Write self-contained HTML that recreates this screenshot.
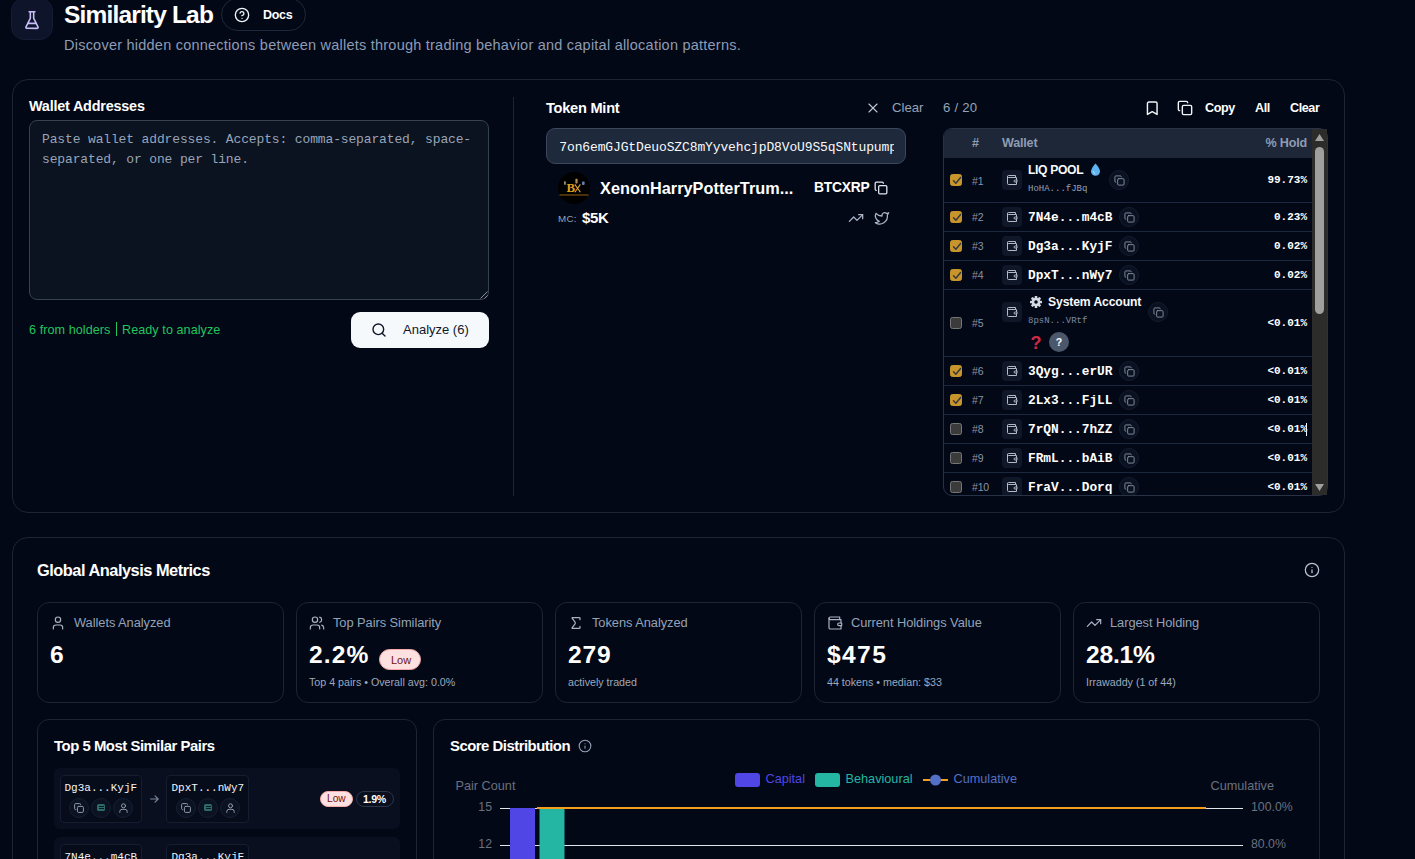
<!DOCTYPE html>
<html lang="en">
<head>
<meta charset="utf-8">
<title>Similarity Lab</title>
<style>
*{box-sizing:border-box;margin:0;padding:0}
html,body{width:1415px;height:859px;overflow:hidden;background:#030816;color:#fff;font-family:"Liberation Sans",Arial,sans-serif;}
body{position:relative}
.abs{position:absolute}
.mono{font-family:"Liberation Mono","DejaVu Sans Mono",monospace}
.t{position:absolute;white-space:nowrap;line-height:1}
svg{display:block;overflow:visible}
.ic{position:absolute;fill:none;stroke:currentColor;stroke-width:2;stroke-linecap:round;stroke-linejoin:round}
/* header */
#logo{left:11px;top:-2px;width:42px;height:42px;border-radius:13px;background:#0e152a;border:1px solid #151d35}
#docs{left:221px;top:-2px;width:85px;height:33px;border-radius:17px;border:1px solid #1e293b}
.card{position:absolute;border:1px solid #1c2536;border-radius:16px;background:#030816}
.hb{margin-top:1px;font-size:12.6px;font-weight:700;letter-spacing:-0.42px}

.th{font-size:12.6px;font-weight:700;color:#8e9bb2;letter-spacing:-0.2px}
.cb{width:12px;height:12px;border-radius:2.5px;background:#3b3b3b;border:1px solid #767676}
.cb.on{background:#c8952c;border-color:#c8952c}
.num{font-size:10.5px;color:#8794aa;letter-spacing:-0.2px}
.wb{width:20px;height:20px;border-radius:4px;background:#0f1728}
.cbn{width:20px;height:20px;border-radius:10px;background:#0a1120;border:1px solid #141d30}
.lbl{font-size:12.2px;font-weight:700;letter-spacing:-0.25px;color:#f8fafc}
.sub{font-size:9px;color:#94a3b8}
.addr{font-size:12.8px;font-weight:700;color:#fff}
.pct{font-size:11px;font-weight:700;color:#fff}
/*C2*/
.mc{width:247px;height:101px;border:1px solid #1c2536;border-radius:12px;background:#030816}
.mi{stroke-width:1.15;color:#a9b3c4}
.ml{font-size:12.85px;color:#94a3b8;letter-spacing:-0.05px}
.mv{font-size:24.600px;font-weight:700;letter-spacing:-0.2px}
.ms{font-size:10.7px;color:#9da9bd;letter-spacing:0px}
.pc{width:20px;height:20px;border-radius:10px;background:#0b1222;border:1px solid #161f33}
/*C2E*/</style>
</head>
<body>
<!-- HEADER -->
<div id="logo" class="abs"></div>
<svg class="ic" style="left:22px;top:9.5px;color:#c9bdf7;stroke-width:1.9" width="20" height="20" viewBox="0 0 24 24"><path d="M10 2v7.527a2 2 0 0 1-.211.896L4.720 20.550a1 1 0 0 0 .9 1.450h12.760a1 1 0 0 0 .9-1.450l-5.069-10.127A2 2 0 0 1 14 9.527V2"/><path d="M8.500 2h7"/><path d="M7 16h10"/></svg>
<div class="t" id="title" style="left:64px;top:3px;font-size:24.5px;font-weight:700;letter-spacing:-0.83px">Similarity Lab</div>
<div id="docs" class="abs"></div>
<svg class="ic" style="left:233.5px;top:7px;color:#f1f5f9;stroke-width:2" width="16" height="16" viewBox="0 0 24 24"><circle cx="12" cy="12" r="10"/><path d="M9.090 9a3 3 0 0 1 5.830 1c0 2-3 3-3 3"/><path d="M12 17h.01"/></svg>
<div class="t" id="docs_t" style="left:263px;top:9px;font-size:12.5px;font-weight:700;letter-spacing:-0.3px">Docs</div>
<div class="t" id="sub" style="left:64px;top:38px;font-size:14.5px;letter-spacing:0.23px;color:#8d9bb5">Discover hidden connections between wallets through trading behavior and capital allocation patterns.</div>

<!-- CARD 1 -->
<div class="card" style="left:12px;top:79px;width:1333px;height:434px"></div>
<div class="t" id="wa" style="left:29px;top:99px;font-size:14.4px;font-weight:700;letter-spacing:-0.2px">Wallet Addresses</div>
<div class="abs" id="ta" style="left:29px;top:120px;width:460px;height:180px;border:1px solid #364152;border-radius:8px;background:#0b1220"></div>
<div class="t mono" style="left:42px;top:130px;font-size:13px;letter-spacing:-0.14px;line-height:20px;color:#98a5b8;white-space:pre">Paste wallet addresses. Accepts: comma-separated, space-
separated, or one per line.</div>
<svg class="abs" style="left:480px;top:291px" width="8" height="8" viewBox="0 0 8 8"><path d="M7.5 .5L.5 7.5M7.5 4.5L4.5 7.5" stroke="#8a92a0" stroke-width="1" fill="none"/></svg>
<div class="t" id="status" style="left:29px;top:322px;font-size:12.6px;letter-spacing:0.07px;color:#22c55e">6 from holders<span style="display:inline-block;width:1px;height:14px;background:#22c55e;margin:0 5px 0 5.500px;vertical-align:-2.500px"></span>Ready to analyze</div>
<div class="abs" id="abtn" style="left:351px;top:312px;width:138px;height:36px;border-radius:9px;background:#f5f9fc"></div>
<svg class="ic" style="left:371px;top:322px;color:#0f172a;stroke-width:2.1" width="16" height="16" viewBox="0 0 24 24"><circle cx="11" cy="11" r="8"/><path d="m21 21-4.300-4.300"/></svg>
<div class="t" id="abtn_t" style="left:403px;top:323px;font-size:13px;color:#0f172a;">Analyze (6)</div>
<div class="abs" style="left:513px;top:97px;width:1px;height:399px;background:#1c2536"></div>


<!-- TOKEN MINT -->
<div class="t" id="tm" style="left:546px;top:101px;font-size:14.6px;font-weight:700;letter-spacing:-0.25px">Token Mint</div>
<svg class="ic" style="left:864.7px;top:100.3px;color:#bcc6d4;stroke-width:1.7" width="16" height="16" viewBox="0 0 24 24"><path d="M18 6 6 18"/><path d="m6 6 12 12"/></svg>
<div class="t" id="clr1" style="left:892px;top:101px;font-size:13.2px;color:#94a3b8">Clear</div>
<div class="abs" style="left:546px;top:128px;width:360px;height:36px;border:1px solid #3a475c;border-radius:9px;background:#1e293b;overflow:hidden">
  <div class="t mono" id="mint" style="left:12.3px;top:11px;width:334.5px;overflow:hidden;font-size:13px;letter-spacing:-0.13px;color:#f8fafc;line-height:15px">7on6emGJGtDeuoSZC8mYyvehcjpD8VoU9S5qSNtupump</div>
</div>
<svg class="abs" style="left:558px;top:172px" width="32" height="32" viewBox="0 0 32 32"><circle cx="16" cy="16" r="16" fill="#000"/><text x="12.700" y="20.400" font-family="Liberation Serif,serif" font-weight="700" font-size="12.800" fill="#dfa01f" text-anchor="middle">B</text><path d="M16.800 12.400l5.600 7.800M22.400 12.400l-5.600 7.800" stroke="#d9a531" stroke-width="1.100" fill="none"/><rect x="1.500" y="22.300" width="29" height="1.400" fill="#7a5414" opacity=".85"/><rect x="6" y="9.200" width="1.800" height="3.600" rx=".6" fill="#c9c2b0" opacity=".75"/><rect x="17.400" y="6.800" width="2.200" height="4.600" rx=".7" fill="#e0b070" opacity=".8"/><rect x="24" y="9.400" width="2.600" height="3.600" rx=".8" fill="#7f9fd6" opacity=".8"/></svg>
<div class="t" id="tname" style="left:600px;top:180px;font-size:16.3px;font-weight:700;letter-spacing:0.03px">XenonHarryPotterTrum...</div>
<div class="t" id="tsym" style="left:814px;top:181px;font-size:13.8px;font-weight:700;letter-spacing:-0.2px">BTCXRP</div>
<svg class="ic" style="left:874.4px;top:181.3px;color:#e2e8f0;stroke-width:2.2" width="14" height="14" viewBox="0 0 24 24"><rect width="14" height="14" x="8" y="8" rx="2" ry="2"/><path d="M4 16c-1.1 0-2-.9-2-2V4c0-1.1.9-2 2-2h10c1.1 0 2 .9 2 2"/></svg>
<div class="t" id="mc" style="left:558px;top:214px;font-size:9.8px;color:#94a3b8;letter-spacing:0.3px">MC:</div>
<div class="t" id="mcv" style="left:582px;top:210px;font-size:15px;font-weight:700;letter-spacing:-0.3px">$5K</div>
<svg class="ic" style="left:848.1px;top:209.7px;color:#aab6c8;stroke-width:1.9" width="16" height="16" viewBox="0 0 24 24"><polyline points="22 7 13.5 15.5 8.5 10.5 2 17"/><polyline points="16 7 22 7 22 13"/></svg>
<svg class="ic" style="left:873.7px;top:209.7px;color:#aab6c8;stroke-width:1.9" width="16" height="16" viewBox="0 0 24 24"><path d="M22 4s-.7 2.100-2 3.400c1.600 10-9.400 17.300-18 11.600 2.200.1 4.400-.6 6-2C3 15.500.5 9.600 3 5c2.200 2.600 5.600 4.100 9 4-.9-4.200 4-6.600 7-3.800 1.100 0 3-1.200 3-1.200z"/></svg>

<!-- HOLDERS HEADER -->
<div class="t" id="cnt" style="left:943px;top:101px;font-size:13.200px;color:#94a3b8;letter-spacing:0.2px">6 / 20</div>
<svg class="ic" style="left:1144.3px;top:99.8px;color:#f1f5f9;stroke-width:2.1" width="16.5" height="16.5" viewBox="0 0 24 24"><path d="m19 21-7-4-7 4V5a2 2 0 0 1 2-2h10a2 2 0 0 1 2 2v16z"/></svg>
<svg class="ic" style="left:1177px;top:100.1px;color:#f1f5f9;stroke-width:2.1" width="16" height="16" viewBox="0 0 24 24"><rect width="14" height="14" x="8" y="8" rx="2" ry="2"/><path d="M4 16c-1.1 0-2-.9-2-2V4c0-1.1.9-2 2-2h10c1.1 0 2 .9 2 2"/></svg>
<div class="t hb" id="h_copy" style="left:1205px;top:101px">Copy</div>
<div class="t hb" id="h_all" style="left:1255px;top:101px">All</div>
<div class="t hb" id="h_clear" style="left:1290px;top:101px">Clear</div>

<!--TABLE_START-->
<div class="abs" id="tbl" style="left:943px;top:128px;width:385px;height:368px;border:1px solid #273244;border-radius:9px;overflow:hidden;background:#030816">
<div class="abs" style="left:0;top:0;width:369px;height:29px;background:#1d2738"></div>
<div class="t th" style="left:28px;top:8px">#</div>
<div class="t th" style="left:58px;top:8px">Wallet</div>
<div class="t th" id="th_hold" style="right:20px;top:8px">% Hold</div>
<div class="abs cb on" style="left:6px;top:45px"><svg class="ic" style="left:0.5px;top:1px;stroke-width:1.5;color:#3a3a3a" width="10" height="9" viewBox="0 0 10 9"><path d="M1.5 4.8l2.400 2.500L8.6 1.6"/></svg></div>
<div class="t num" style="left:28px;top:47px">#1</div>
<div class="abs wb" style="left:58px;top:41px"></div><svg class="ic" style="left:62px;top:45px;color:#b3bbc9;stroke-width:2" width="12" height="12" viewBox="0 0 24 24"><path d="M21 12V7H5a2 2 0 0 1 0-4h14v4"/><path d="M3 5v14a2 2 0 0 0 2 2h16v-5"/><path d="M18 12a2 2 0 0 0 0 4h4v-4Z"/></svg>
<div class="t lbl" style="left:84px;top:35px;letter-spacing:-0.38px">LIQ POOL</div>
<svg class="abs" style="left:145.5px;top:34px" width="11" height="13" viewBox="0 0 11 13"><path d="M5.5 .5C5.5 .5 1 5.5 1 8.300a4.5 4.5 0 0 0 9 0C10 5.5 5.5 .5 5.5 .5z" fill="#5fb4f0"/><path d="M3.3 8.500a2.3 2.3 0 0 0 1.6 2.100" stroke="#c7e6fb" stroke-width="1" fill="none" stroke-linecap="round"/></svg>
<div class="t mono sub" style="left:84px;top:56px">HoHA...fJBq</div>
<div class="abs cbn" style="left:165px;top:41px"></div><svg class="ic" style="left:169.5px;top:45.5px;color:#8893a7;stroke-width:2" width="11" height="11" viewBox="0 0 24 24"><rect width="14" height="14" x="8" y="8" rx="2" ry="2"/><path d="M4 16c-1.1 0-2-.9-2-2V4c0-1.1.9-2 2-2h10c1.1 0 2 .9 2 2"/></svg>
<div class="t mono pct" style="right:20px;top:46px">99.73%</div>
<div class="abs" style="left:0;top:73px;width:369px;height:1px;background:#1c2840"></div>
<div class="abs cb on" style="left:6px;top:82px"><svg class="ic" style="left:0.5px;top:1px;stroke-width:1.5;color:#3a3a3a" width="10" height="9" viewBox="0 0 10 9"><path d="M1.5 4.8l2.400 2.500L8.6 1.6"/></svg></div>
<div class="t num" style="left:28px;top:83px">#2</div>
<div class="abs wb" style="left:58px;top:78px"></div><svg class="ic" style="left:62px;top:82px;color:#b3bbc9;stroke-width:2" width="12" height="12" viewBox="0 0 24 24"><path d="M21 12V7H5a2 2 0 0 1 0-4h14v4"/><path d="M3 5v14a2 2 0 0 0 2 2h16v-5"/><path d="M18 12a2 2 0 0 0 0 4h4v-4Z"/></svg>
<div class="t mono addr" style="left:84px;top:83px">7N4e...m4cB</div>
<div class="abs cbn" style="left:175px;top:78px"></div><svg class="ic" style="left:179.5px;top:82.5px;color:#8893a7;stroke-width:2" width="11" height="11" viewBox="0 0 24 24"><rect width="14" height="14" x="8" y="8" rx="2" ry="2"/><path d="M4 16c-1.1 0-2-.9-2-2V4c0-1.1.9-2 2-2h10c1.1 0 2 .9 2 2"/></svg>
<div class="t mono pct" style="right:20px;top:83px">0.23%</div>
<div class="abs" style="left:0;top:102px;width:369px;height:1px;background:#1c2840"></div>
<div class="abs cb on" style="left:6px;top:111px"><svg class="ic" style="left:0.5px;top:1px;stroke-width:1.5;color:#3a3a3a" width="10" height="9" viewBox="0 0 10 9"><path d="M1.5 4.8l2.400 2.500L8.6 1.6"/></svg></div>
<div class="t num" style="left:28px;top:112px">#3</div>
<div class="abs wb" style="left:58px;top:107px"></div><svg class="ic" style="left:62px;top:111px;color:#b3bbc9;stroke-width:2" width="12" height="12" viewBox="0 0 24 24"><path d="M21 12V7H5a2 2 0 0 1 0-4h14v4"/><path d="M3 5v14a2 2 0 0 0 2 2h16v-5"/><path d="M18 12a2 2 0 0 0 0 4h4v-4Z"/></svg>
<div class="t mono addr" style="left:84px;top:112px">Dg3a...KyjF</div>
<div class="abs cbn" style="left:175px;top:107px"></div><svg class="ic" style="left:179.5px;top:111.5px;color:#8893a7;stroke-width:2" width="11" height="11" viewBox="0 0 24 24"><rect width="14" height="14" x="8" y="8" rx="2" ry="2"/><path d="M4 16c-1.1 0-2-.9-2-2V4c0-1.1.9-2 2-2h10c1.1 0 2 .9 2 2"/></svg>
<div class="t mono pct" style="right:20px;top:112px">0.02%</div>
<div class="abs" style="left:0;top:131px;width:369px;height:1px;background:#1c2840"></div>
<div class="abs cb on" style="left:6px;top:140px"><svg class="ic" style="left:0.5px;top:1px;stroke-width:1.5;color:#3a3a3a" width="10" height="9" viewBox="0 0 10 9"><path d="M1.5 4.8l2.400 2.500L8.6 1.6"/></svg></div>
<div class="t num" style="left:28px;top:141px">#4</div>
<div class="abs wb" style="left:58px;top:136px"></div><svg class="ic" style="left:62px;top:140px;color:#b3bbc9;stroke-width:2" width="12" height="12" viewBox="0 0 24 24"><path d="M21 12V7H5a2 2 0 0 1 0-4h14v4"/><path d="M3 5v14a2 2 0 0 0 2 2h16v-5"/><path d="M18 12a2 2 0 0 0 0 4h4v-4Z"/></svg>
<div class="t mono addr" style="left:84px;top:141px">DpxT...nWy7</div>
<div class="abs cbn" style="left:175px;top:136px"></div><svg class="ic" style="left:179.5px;top:140.5px;color:#8893a7;stroke-width:2" width="11" height="11" viewBox="0 0 24 24"><rect width="14" height="14" x="8" y="8" rx="2" ry="2"/><path d="M4 16c-1.1 0-2-.9-2-2V4c0-1.1.9-2 2-2h10c1.1 0 2 .9 2 2"/></svg>
<div class="t mono pct" style="right:20px;top:141px">0.02%</div>
<div class="abs" style="left:0;top:160px;width:369px;height:1px;background:#1c2840"></div>
<div class="abs cb" style="left:6px;top:188px"></div>
<div class="t num" style="left:28px;top:189px">#5</div>
<div class="abs wb" style="left:58px;top:173px"></div><svg class="ic" style="left:62px;top:177px;color:#b3bbc9;stroke-width:2" width="12" height="12" viewBox="0 0 24 24"><path d="M21 12V7H5a2 2 0 0 1 0-4h14v4"/><path d="M3 5v14a2 2 0 0 0 2 2h16v-5"/><path d="M18 12a2 2 0 0 0 0 4h4v-4Z"/></svg>
<svg class="abs" style="left:86px;top:167px" width="12" height="12" viewBox="0 0 24 24"><g transform="translate(12 12)"><g fill="#d6dbe4"><circle r="8.5"/><rect x="-2.6" y="-12" width="5.2" height="24" rx="1" transform="rotate(0)"/><rect x="-2.6" y="-12" width="5.2" height="24" rx="1" transform="rotate(45)"/><rect x="-2.6" y="-12" width="5.2" height="24" rx="1" transform="rotate(90)"/><rect x="-2.6" y="-12" width="5.2" height="24" rx="1" transform="rotate(135)"/></g><circle r="3.600" fill="#030816"/></g></svg>
<div class="t lbl" style="left:104px;top:167px;letter-spacing:-0.13px">System Account</div>
<div class="t mono sub" style="left:84px;top:188px;color:#7d8aa0">8psN...VRtf</div>
<div class="abs cbn" style="left:204px;top:173px"></div><svg class="ic" style="left:208.5px;top:177.5px;color:#8893a7;stroke-width:2" width="11" height="11" viewBox="0 0 24 24"><rect width="14" height="14" x="8" y="8" rx="2" ry="2"/><path d="M4 16c-1.1 0-2-.9-2-2V4c0-1.1.9-2 2-2h10c1.1 0 2 .9 2 2"/></svg>
<div class="t" style="left:86.5px;top:205px;font-size:18px;font-weight:700;color:#cf2a45">?</div>
<div class="abs" style="left:105px;top:203px;width:20px;height:20px;border-radius:10px;background:#4b586c"></div><div class="t" style="left:111.7px;top:207.5px;font-size:10.5px;font-weight:700;color:#fff">?</div>
<div class="t mono pct" style="right:20px;top:189px">&lt;0.01%</div>
<div class="abs" style="left:0;top:227px;width:369px;height:1px;background:#1c2840"></div>
<div class="abs cb on" style="left:6px;top:236px"><svg class="ic" style="left:0.5px;top:1px;stroke-width:1.5;color:#3a3a3a" width="10" height="9" viewBox="0 0 10 9"><path d="M1.5 4.8l2.400 2.500L8.6 1.6"/></svg></div>
<div class="t num" style="left:28px;top:237px">#6</div>
<div class="abs wb" style="left:58px;top:232px"></div><svg class="ic" style="left:62px;top:236px;color:#b3bbc9;stroke-width:2" width="12" height="12" viewBox="0 0 24 24"><path d="M21 12V7H5a2 2 0 0 1 0-4h14v4"/><path d="M3 5v14a2 2 0 0 0 2 2h16v-5"/><path d="M18 12a2 2 0 0 0 0 4h4v-4Z"/></svg>
<div class="t mono addr" style="left:84px;top:237px">3Qyg...erUR</div>
<div class="abs cbn" style="left:175px;top:232px"></div><svg class="ic" style="left:179.5px;top:236.5px;color:#8893a7;stroke-width:2" width="11" height="11" viewBox="0 0 24 24"><rect width="14" height="14" x="8" y="8" rx="2" ry="2"/><path d="M4 16c-1.1 0-2-.9-2-2V4c0-1.1.9-2 2-2h10c1.1 0 2 .9 2 2"/></svg>
<div class="t mono pct" style="right:20px;top:237px">&lt;0.01%</div>
<div class="abs" style="left:0;top:256px;width:369px;height:1px;background:#1c2840"></div>
<div class="abs cb on" style="left:6px;top:265px"><svg class="ic" style="left:0.5px;top:1px;stroke-width:1.5;color:#3a3a3a" width="10" height="9" viewBox="0 0 10 9"><path d="M1.5 4.8l2.400 2.500L8.6 1.6"/></svg></div>
<div class="t num" style="left:28px;top:266px">#7</div>
<div class="abs wb" style="left:58px;top:261px"></div><svg class="ic" style="left:62px;top:265px;color:#b3bbc9;stroke-width:2" width="12" height="12" viewBox="0 0 24 24"><path d="M21 12V7H5a2 2 0 0 1 0-4h14v4"/><path d="M3 5v14a2 2 0 0 0 2 2h16v-5"/><path d="M18 12a2 2 0 0 0 0 4h4v-4Z"/></svg>
<div class="t mono addr" style="left:84px;top:266px">2Lx3...FjLL</div>
<div class="abs cbn" style="left:175px;top:261px"></div><svg class="ic" style="left:179.5px;top:265.5px;color:#8893a7;stroke-width:2" width="11" height="11" viewBox="0 0 24 24"><rect width="14" height="14" x="8" y="8" rx="2" ry="2"/><path d="M4 16c-1.1 0-2-.9-2-2V4c0-1.1.9-2 2-2h10c1.1 0 2 .9 2 2"/></svg>
<div class="t mono pct" style="right:20px;top:266px">&lt;0.01%</div>
<div class="abs" style="left:0;top:285px;width:369px;height:1px;background:#1c2840"></div>
<div class="abs cb" style="left:6px;top:294px"></div>
<div class="t num" style="left:28px;top:295px">#8</div>
<div class="abs wb" style="left:58px;top:290px"></div><svg class="ic" style="left:62px;top:294px;color:#b3bbc9;stroke-width:2" width="12" height="12" viewBox="0 0 24 24"><path d="M21 12V7H5a2 2 0 0 1 0-4h14v4"/><path d="M3 5v14a2 2 0 0 0 2 2h16v-5"/><path d="M18 12a2 2 0 0 0 0 4h4v-4Z"/></svg>
<div class="t mono addr" style="left:84px;top:295px">7rQN...7hZZ</div>
<div class="abs cbn" style="left:175px;top:290px"></div><svg class="ic" style="left:179.5px;top:294.5px;color:#8893a7;stroke-width:2" width="11" height="11" viewBox="0 0 24 24"><rect width="14" height="14" x="8" y="8" rx="2" ry="2"/><path d="M4 16c-1.1 0-2-.9-2-2V4c0-1.1.9-2 2-2h10c1.1 0 2 .9 2 2"/></svg>
<div class="t mono pct" style="right:20px;top:295px">&lt;0.01%</div>
<div class="abs" style="left:0;top:314px;width:369px;height:1px;background:#1c2840"></div>
<div class="abs cb" style="left:6px;top:323px"></div>
<div class="t num" style="left:28px;top:324px">#9</div>
<div class="abs wb" style="left:58px;top:319px"></div><svg class="ic" style="left:62px;top:323px;color:#b3bbc9;stroke-width:2" width="12" height="12" viewBox="0 0 24 24"><path d="M21 12V7H5a2 2 0 0 1 0-4h14v4"/><path d="M3 5v14a2 2 0 0 0 2 2h16v-5"/><path d="M18 12a2 2 0 0 0 0 4h4v-4Z"/></svg>
<div class="t mono addr" style="left:84px;top:324px">FRmL...bAiB</div>
<div class="abs cbn" style="left:175px;top:319px"></div><svg class="ic" style="left:179.5px;top:323.5px;color:#8893a7;stroke-width:2" width="11" height="11" viewBox="0 0 24 24"><rect width="14" height="14" x="8" y="8" rx="2" ry="2"/><path d="M4 16c-1.1 0-2-.9-2-2V4c0-1.1.9-2 2-2h10c1.1 0 2 .9 2 2"/></svg>
<div class="t mono pct" style="right:20px;top:324px">&lt;0.01%</div>
<div class="abs" style="left:0;top:343px;width:369px;height:1px;background:#1c2840"></div>
<div class="abs cb" style="left:6px;top:352px"></div>
<div class="t num" style="left:28px;top:353px">#10</div>
<div class="abs wb" style="left:58px;top:348px"></div><svg class="ic" style="left:62px;top:352px;color:#b3bbc9;stroke-width:2" width="12" height="12" viewBox="0 0 24 24"><path d="M21 12V7H5a2 2 0 0 1 0-4h14v4"/><path d="M3 5v14a2 2 0 0 0 2 2h16v-5"/><path d="M18 12a2 2 0 0 0 0 4h4v-4Z"/></svg>
<div class="t mono addr" style="left:84px;top:353px">FraV...Dorq</div>
<div class="abs cbn" style="left:175px;top:348px"></div><svg class="ic" style="left:179.5px;top:352.5px;color:#8893a7;stroke-width:2" width="11" height="11" viewBox="0 0 24 24"><rect width="14" height="14" x="8" y="8" rx="2" ry="2"/><path d="M4 16c-1.1 0-2-.9-2-2V4c0-1.1.9-2 2-2h10c1.1 0 2 .9 2 2"/></svg>
<div class="t mono pct" style="right:20px;top:353px">&lt;0.01%</div>
</div>
<div class="abs" style="left:1312px;top:129px;width:15px;height:366px;background:#2c2c2b"></div>
<svg class="abs" style="left:1315px;top:134px" width="9" height="7" viewBox="0 0 9 7"><path d="M4.5 0L9 7H0z" fill="#9f9f9f"/></svg>
<div class="abs" style="left:1315px;top:147px;width:9px;height:167px;border-radius:4.5px;background:#9f9f9f"></div>
<svg class="abs" style="left:1315px;top:484px" width="9" height="7" viewBox="0 0 9 7"><path d="M4.5 7L9 0H0z" fill="#9f9f9f"/></svg>
<div class="abs" id="ibeam" style="left:1306px;top:423px;width:1px;height:13px;background:#f1f5f9"></div>
<!--TABLE_END-->
<!--CARD2_START-->
<div class="card" style="left:12px;top:537px;width:1333px;height:400px"></div>
<div class="t" id="gam" style="left:37px;top:562px;font-size:16.4px;font-weight:700;letter-spacing:-0.5px">Global Analysis Metrics</div>
<svg class="ic" style="left:1304px;top:562px;color:#b8c3d6;stroke-width:1.9" width="16" height="16" viewBox="0 0 24 24"><circle cx="12" cy="12" r="10"/><path d="M12 16v-4"/><path d="M12 8h.01"/></svg>
<div class="abs mc" style="left:37px;top:602px"></div>
<svg class="ic" style="left:50px;top:614.5px;color:#a9b3c4;stroke-width:1.8" width="16" height="16" viewBox="0 0 24 24"><path d="M19 21v-2a4 4 0 0 0-4-4H9a4 4 0 0 0-4 4v2"/><circle cx="12" cy="7" r="4"/></svg>
<div class="t ml" style="left:74px;top:617px">Wallets Analyzed</div>
<div class="t mv" style="left:50px;top:643px;letter-spacing:0px">6</div>
<div class="abs mc" style="left:296px;top:602px"></div>
<svg class="ic" style="left:309px;top:614.5px;color:#a9b3c4;stroke-width:1.8" width="16" height="16" viewBox="0 0 24 24"><path d="M16 21v-2a4 4 0 0 0-4-4H6a4 4 0 0 0-4 4v2"/><circle cx="9" cy="7" r="4"/><path d="M22 21v-2a4 4 0 0 0-3-3.870"/><path d="M16 3.130a4 4 0 0 1 0 7.750"/></svg>
<div class="t ml" style="left:333px;top:617px">Top Pairs Similarity</div>
<div class="t mv" style="left:309px;top:643px;letter-spacing:1.08px">2.2%</div>
<div class="t ms" style="left:309px;top:677px">Top 4 pairs • Overall avg: 0.0%</div>
<div class="abs mc" style="left:555px;top:602px"></div>
<svg class="ic" style="left:568px;top:614.5px;color:#a9b3c4;stroke-width:1.8" width="16" height="16" viewBox="0 0 24 24"><path d="M18 7V5a1 1 0 0 0-1-1H6.500a.5.5 0 0 0-.4.8l4.500 6a2 2 0 0 1 0 2.400l-4.500 6a.5.5 0 0 0 .4.8H17a1 1 0 0 0 1-1v-2"/></svg>
<div class="t ml" style="left:592px;top:617px">Tokens Analyzed</div>
<div class="t mv" style="left:568px;top:643px;letter-spacing:0.77px">279</div>
<div class="t ms" style="left:568px;top:677px">actively traded</div>
<div class="abs mc" style="left:814px;top:602px"></div>
<svg class="ic" style="left:827px;top:614.5px;color:#a9b3c4;stroke-width:1.8" width="16" height="16" viewBox="0 0 24 24"><path d="M21 12V7H5a2 2 0 0 1 0-4h14v4"/><path d="M3 5v14a2 2 0 0 0 2 2h16v-5"/><path d="M18 12a2 2 0 0 0 0 4h4v-4Z"/></svg>
<div class="t ml" style="left:851px;top:617px">Current Holdings Value</div>
<div class="t mv" style="left:827px;top:643px;letter-spacing:1.37px">$475</div>
<div class="t ms" style="left:827px;top:677px">44 tokens • median: $33</div>
<div class="abs mc" style="left:1073px;top:602px"></div>
<svg class="ic" style="left:1086px;top:614.5px;color:#a9b3c4;stroke-width:1.8" width="16" height="16" viewBox="0 0 24 24"><polyline points="22 7 13.5 15.5 8.5 10.5 2 17"/><polyline points="16 7 22 7 22 13"/></svg>
<div class="t ml" style="left:1110px;top:617px">Largest Holding</div>
<div class="t mv" style="left:1086px;top:643px;letter-spacing:-0.2px">28.1%</div>
<div class="t ms" style="left:1086px;top:677px">Irrawaddy (1 of 44)</div>
<div class="abs" style="left:379px;top:649px;width:42px;height:21px;border-radius:11px;background:#fde1e1;border:1px solid #f5a9a9"></div><div class="t" style="left:391px;top:654.5px;font-size:11px;color:#701313">Low</div>
<div class="abs mc" style="left:37px;top:719px;width:380px;height:200px"></div>
<div class="t" id="t5" style="left:54px;top:739px;font-size:14.9px;font-weight:700;letter-spacing:-0.47px">Top 5 Most Similar Pairs</div>
<div class="abs" style="left:54px;top:768px;width:346px;height:61px;border-radius:6px;background:#090f1e"></div>
<div class="abs" style="left:60px;top:775px;width:82px;height:48px;border-radius:4px;border:1px solid #151d2f;background:#070c1a"></div>
<div class="t mono" style="left:64.5px;top:783px;font-size:11px;color:#f1f5f9">Dg3a...KyjF</div>
<div class="abs pc" style="left:69px;top:798px"></div>
<svg class="ic" style="left:74px;top:803px;stroke-width:1;color:#8f9aad" width="10" height="10" viewBox="0 0 10 10"><rect x="3.4" y="3.4" width="6" height="6" rx="1.2"/><path d="M1.8 6.6H1.600A1 1 0 0 1 .6 5.6V1.600A1 1 0 0 1 1.6 .6h4a1 1 0 0 1 1 1v.2"/></svg>
<div class="abs pc" style="left:91px;top:798px"></div>
<div class="abs" style="left:97px;top:804px;width:8px;height:7px;border-radius:1.5px;background:#2c6b69"></div><div class="abs" style="left:98.5px;top:806px;width:5px;height:1px;background:#0b1a20"></div><div class="abs" style="left:98.5px;top:808px;width:5px;height:1px;background:#0b1a20"></div>
<div class="abs pc" style="left:113px;top:798px"></div>
<svg class="ic" style="left:118.5px;top:803px;stroke-width:1;color:#929db0" width="9" height="10" viewBox="0 0 9 10"><circle cx="4.5" cy="2.8" r="2"/><path d="M.8 9.400v-.8a2.300 2.300 0 0 1 2.300-2.300h2.800a2.300 2.300 0 0 1 2.300 2.300v.8"/></svg>
<div class="abs" style="left:166px;top:775px;width:83px;height:48px;border-radius:4px;border:1px solid #151d2f;background:#070c1a"></div>
<div class="t mono" style="left:171.5px;top:783px;font-size:11px;color:#f1f5f9">DpxT...nWy7</div>
<div class="abs pc" style="left:176px;top:798px"></div>
<svg class="ic" style="left:181px;top:803px;stroke-width:1;color:#8f9aad" width="10" height="10" viewBox="0 0 10 10"><rect x="3.4" y="3.4" width="6" height="6" rx="1.2"/><path d="M1.8 6.6H1.600A1 1 0 0 1 .6 5.6V1.600A1 1 0 0 1 1.6 .6h4a1 1 0 0 1 1 1v.2"/></svg>
<div class="abs pc" style="left:198px;top:798px"></div>
<div class="abs" style="left:204px;top:804px;width:8px;height:7px;border-radius:1.5px;background:#2c6b69"></div><div class="abs" style="left:205.5px;top:806px;width:5px;height:1px;background:#0b1a20"></div><div class="abs" style="left:205.5px;top:808px;width:5px;height:1px;background:#0b1a20"></div>
<div class="abs pc" style="left:220px;top:798px"></div>
<svg class="ic" style="left:225.5px;top:803px;stroke-width:1;color:#929db0" width="9" height="10" viewBox="0 0 9 10"><circle cx="4.5" cy="2.8" r="2"/><path d="M.8 9.400v-.8a2.300 2.300 0 0 1 2.300-2.300h2.800a2.300 2.300 0 0 1 2.300 2.300v.8"/></svg>
<svg class="ic" style="left:150px;top:795px;stroke-width:1.1;color:#7b879b" width="9" height="8" viewBox="0 0 9 8"><path d="M.6 4h7.600M5 .8L8.200 4 5 7.200"/></svg>
<div class="abs" style="left:320px;top:791px;width:33px;height:16px;border-radius:8px;background:#fde1e1;border:1px solid #f5a9a9"></div><div class="t" style="left:327px;top:794px;font-size:10.2px;color:#701313">Low</div>
<div class="abs" style="left:356px;top:791px;width:38px;height:16px;border-radius:8px;border:1px solid #2a3548"></div><div class="t" style="left:363px;top:794px;font-size:10.6px;font-weight:700;letter-spacing:-0.3px;color:#fff">1.9%</div>
<div class="abs" style="left:54px;top:837px;width:346px;height:61px;border-radius:6px;background:#090f1e"></div>
<div class="abs" style="left:60px;top:844px;width:82px;height:48px;border-radius:4px;border:1px solid #151d2f;background:#070c1a"></div>
<div class="t mono" style="left:64.5px;top:852px;font-size:11px;color:#f1f5f9">7N4e...m4cB</div>
<div class="abs pc" style="left:69px;top:867px"></div>
<svg class="ic" style="left:74px;top:872px;stroke-width:1;color:#8f9aad" width="10" height="10" viewBox="0 0 10 10"><rect x="3.4" y="3.4" width="6" height="6" rx="1.2"/><path d="M1.8 6.6H1.600A1 1 0 0 1 .6 5.6V1.600A1 1 0 0 1 1.6 .6h4a1 1 0 0 1 1 1v.2"/></svg>
<div class="abs pc" style="left:91px;top:867px"></div>
<div class="abs" style="left:97px;top:873px;width:8px;height:7px;border-radius:1.5px;background:#2c6b69"></div><div class="abs" style="left:98.5px;top:875px;width:5px;height:1px;background:#0b1a20"></div><div class="abs" style="left:98.5px;top:877px;width:5px;height:1px;background:#0b1a20"></div>
<div class="abs pc" style="left:113px;top:867px"></div>
<svg class="ic" style="left:118.5px;top:872px;stroke-width:1;color:#929db0" width="9" height="10" viewBox="0 0 9 10"><circle cx="4.5" cy="2.8" r="2"/><path d="M.8 9.400v-.8a2.300 2.300 0 0 1 2.300-2.300h2.800a2.300 2.300 0 0 1 2.300 2.300v.8"/></svg>
<div class="abs" style="left:166px;top:844px;width:83px;height:48px;border-radius:4px;border:1px solid #151d2f;background:#070c1a"></div>
<div class="t mono" style="left:171.5px;top:852px;font-size:11px;color:#f1f5f9">Dg3a...KyjF</div>
<div class="abs pc" style="left:176px;top:867px"></div>
<svg class="ic" style="left:181px;top:872px;stroke-width:1;color:#8f9aad" width="10" height="10" viewBox="0 0 10 10"><rect x="3.4" y="3.4" width="6" height="6" rx="1.2"/><path d="M1.8 6.6H1.600A1 1 0 0 1 .6 5.6V1.600A1 1 0 0 1 1.6 .6h4a1 1 0 0 1 1 1v.2"/></svg>
<div class="abs pc" style="left:198px;top:867px"></div>
<div class="abs" style="left:204px;top:873px;width:8px;height:7px;border-radius:1.5px;background:#2c6b69"></div><div class="abs" style="left:205.5px;top:875px;width:5px;height:1px;background:#0b1a20"></div><div class="abs" style="left:205.5px;top:877px;width:5px;height:1px;background:#0b1a20"></div>
<div class="abs pc" style="left:220px;top:867px"></div>
<svg class="ic" style="left:225.5px;top:872px;stroke-width:1;color:#929db0" width="9" height="10" viewBox="0 0 9 10"><circle cx="4.5" cy="2.8" r="2"/><path d="M.8 9.400v-.8a2.300 2.300 0 0 1 2.300-2.300h2.800a2.300 2.300 0 0 1 2.300 2.300v.8"/></svg>
<svg class="ic" style="left:150px;top:864px;stroke-width:1.1;color:#7b879b" width="9" height="8" viewBox="0 0 9 8"><path d="M.6 4h7.600M5 .8L8.200 4 5 7.200"/></svg>
<div class="abs" style="left:320px;top:860px;width:33px;height:16px;border-radius:8px;background:#fde1e1;border:1px solid #f5a9a9"></div><div class="t" style="left:327px;top:863px;font-size:10.2px;color:#701313">Low</div>
<div class="abs" style="left:356px;top:860px;width:38px;height:16px;border-radius:8px;border:1px solid #2a3548"></div><div class="t" style="left:363px;top:863px;font-size:10.6px;font-weight:700;letter-spacing:-0.3px;color:#fff">1.4%</div>
<div class="abs mc" style="left:433px;top:719px;width:887px;height:200px"></div>
<div class="t" id="sd" style="left:450px;top:739px;font-size:14.9px;font-weight:700;letter-spacing:-0.5px">Score Distribution</div>
<svg class="ic" style="left:578px;top:738.5px;color:#97a4b9;stroke-width:1.8" width="14" height="14" viewBox="0 0 24 24"><circle cx="12" cy="12" r="10"/><path d="M12 16v-4"/><path d="M12 8h.01"/></svg>
<svg class="abs" style="left:433px;top:719px" width="887" height="140" viewBox="433 719 887 140" font-family="Liberation Sans, sans-serif">
<text x="455.500" y="790" font-size="12.700" fill="#69717e">Pair Count</text>
<text x="1210.500" y="790" font-size="12.700" fill="#69717e">Cumulative</text>
<text x="492" y="810.5" font-size="12.300" fill="#69717e" text-anchor="end">15</text>
<text x="492" y="847.5" font-size="12.300" fill="#69717e" text-anchor="end">12</text>
<text x="1251" y="810.5" font-size="12.300" fill="#69717e">100.0%</text>
<text x="1251" y="847.5" font-size="12.300" fill="#69717e">80.0%</text>
<rect x="500" y="808" width="743" height="1" fill="#e2e5ea"/>
<rect x="500" y="845" width="743" height="1" fill="#e2e5ea"/>
<rect x="510" y="808" width="25" height="60" fill="#4f46e5"/>
<rect x="539.5" y="808" width="25" height="60" fill="#24b6a3"/>
<rect x="537" y="807" width="669" height="2" fill="#f59e1b"/>
<rect x="735" y="773" width="25" height="14" rx="3" fill="#4f46e5"/>
<text x="765.500" y="782.7" font-size="12.700" fill="#4f46e5">Capital</text>
<rect x="815" y="773" width="25" height="14" rx="3" fill="#24b6a3"/>
<text x="845.500" y="782.7" font-size="12.700" fill="#24b6a3">Behavioural</text>
<rect x="923" y="779" width="25" height="2" fill="#f59e1b"/>
<circle cx="935.500" cy="780" r="5.500" fill="#5470c6"/>
<text x="953.500" y="782.7" font-size="12.700" fill="#5470c6">Cumulative</text>
</svg>
<!--CARD2_END-->
</body>
</html>
